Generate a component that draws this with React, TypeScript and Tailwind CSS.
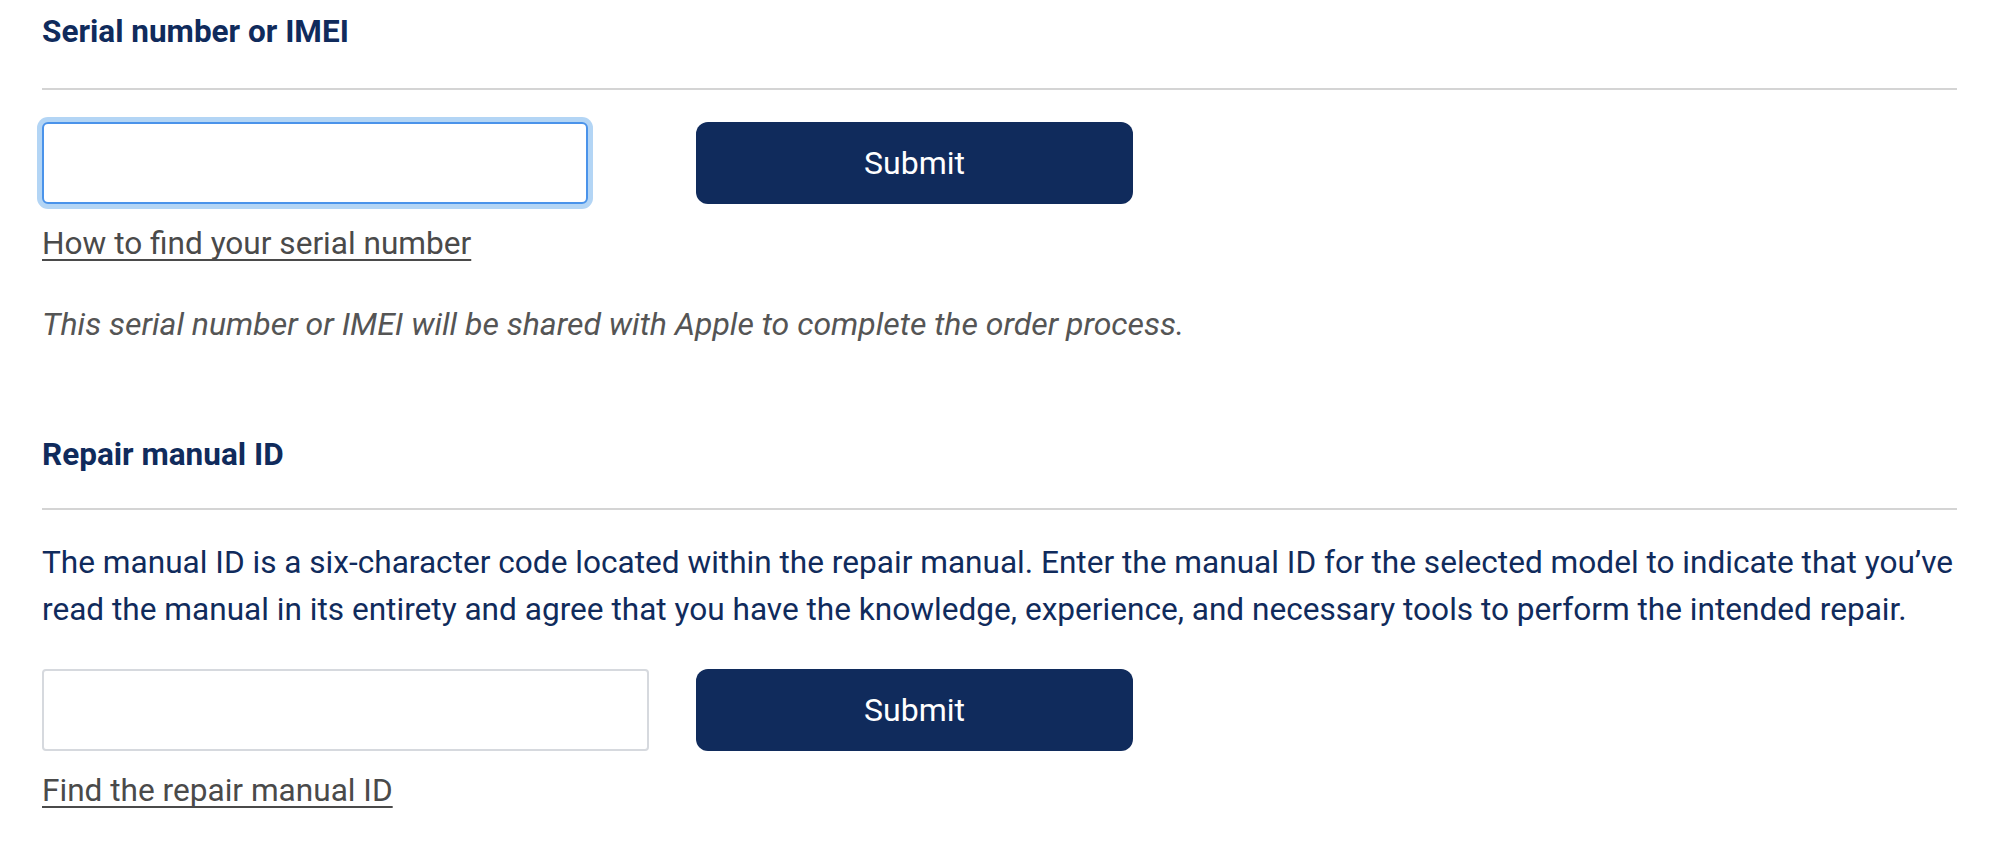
const font = { fontFamily: "Roboto, 'Liberation Sans', sans-serif" };

function Divider() {
  return <div className="h-[2px] w-full bg-[#d4d4d4]" />;
}

function SubmitButton() {
  return (
    <button
      type="button"
      className="h-[82px] w-[437px] rounded-[12px] bg-[#102b5c] text-[32px] text-white"
    >
      Submit
    </button>
  );
}

export default function App() {
  return (
    <div className="min-h-[857px] bg-white px-[42px] text-[#102b5c]" style={font}>
      <section>
        <h2 className="pt-[14px] text-[31.5px] font-bold leading-[36px]">Serial number or IMEI</h2>
        <div className="mt-[38px] w-[1915px]">
          <Divider />
        </div>
        <div className="mt-[32px] flex items-center">
          <div className="w-[654px]">
            <input
              type="text"
              className="h-[82px] w-[546px] rounded-[6px] border-2 border-[#4a93ea] bg-white px-4 text-[28px] outline-none ring-[5px] ring-[#b3d5f5]"
            />
          </div>
          <SubmitButton />
        </div>
        <a
          href="#"
          className="mt-[22px] block w-fit text-[31.6px] leading-[36px] text-[#4a4a4a] underline decoration-[1.5px] underline-offset-[5px] [text-decoration-skip-ink:none]"
        >
          How to find your serial number
        </a>
        <p className="mt-[44px] text-[32px] italic leading-[36px] text-[#555555]">
          This serial number or IMEI will be shared with Apple to complete the order process.
        </p>
      </section>

      <section>
        <h2 className="mt-[95px] text-[31.5px] font-bold leading-[36px]">Repair manual ID</h2>
        <div className="mt-[35px] w-[1915px]">
          <Divider />
        </div>
        <p className="mt-[29px] w-[1935px] text-[31.6px] leading-[47px]">
          The manual ID is a six-character code located within the repair manual. Enter the manual ID for the selected model to indicate that you’ve read the manual in its entirety and agree that you have the knowledge, experience, and necessary tools to perform the intended repair.
        </p>
        <div className="mt-[36px] flex items-center">
          <div className="w-[654px]">
            <input
              type="text"
              className="h-[82px] w-[607px] rounded-[4px] border-2 border-[#d6d9de] bg-white px-4 text-[28px] outline-none"
            />
          </div>
          <SubmitButton />
        </div>
        <a
          href="#"
          className="mt-[22px] block w-fit text-[31.6px] leading-[36px] text-[#4a4a4a] underline decoration-[1.5px] underline-offset-[5px] [text-decoration-skip-ink:none]"
        >
          Find the repair manual ID
        </a>
      </section>
    </div>
  );
}
